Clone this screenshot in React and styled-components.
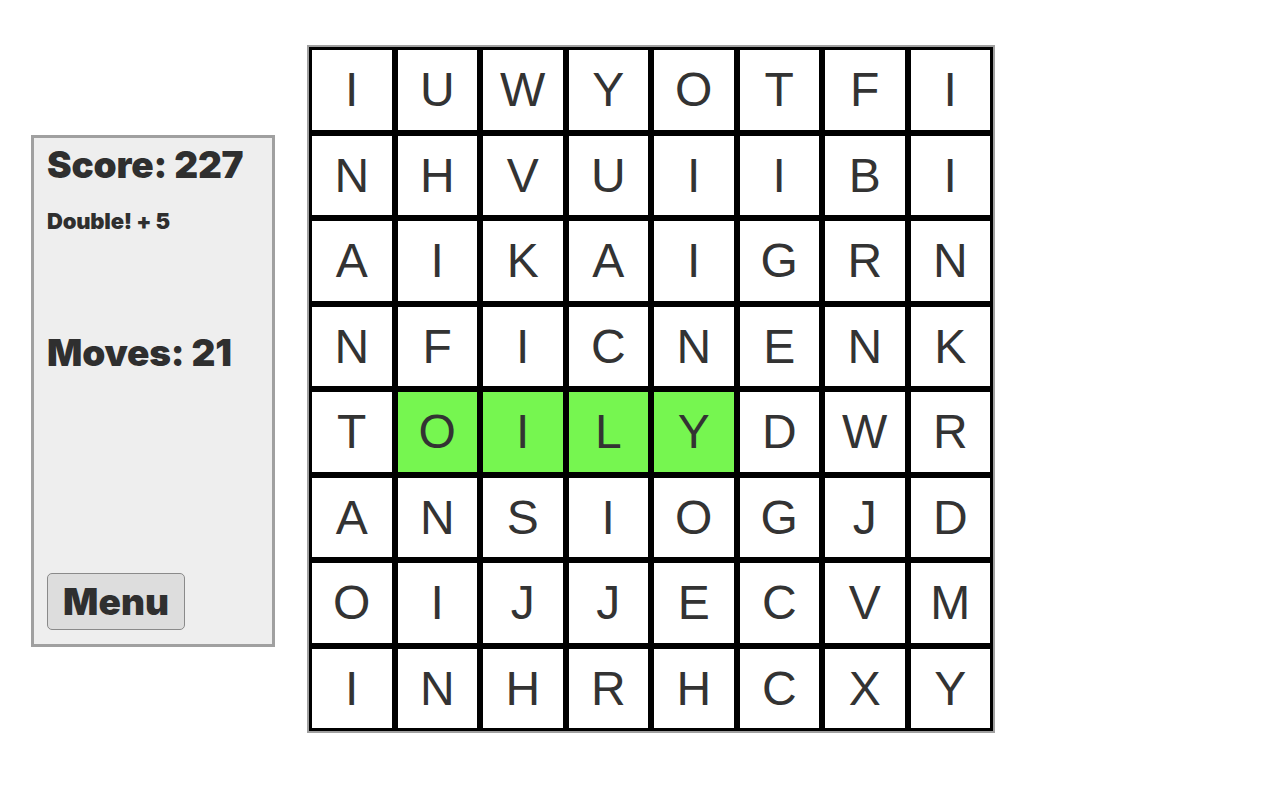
import React from "react";
import styled, { createGlobalStyle } from "styled-components";

const GlobalStyle = createGlobalStyle`
  body {
    margin: 8px;
    background: #ffffff;
    font-family: "Liberation Sans", Arial, sans-serif;
  }
`;

const board = [
  "IUWYOTFI",
  "NHVUIIBI",
  "AIKAIGRN",
  "NFICNENK",
  "TOILYDWR",
  "ANSIOGJD",
  "OIJJECVM",
  "INHRHCXY",
];

const selected = ["4-1", "4-2", "4-3", "4-4"];

const Page = styled.div`
  display: flex;
  align-items: center;
  padding-top: 37px;
`;

const Panel = styled.div`
  display: flex;
  flex-direction: column;
  box-sizing: border-box;
  width: 244px;
  height: 512px;
  margin: 3px 32px 0 23px;
  padding: 5px 14px 14px 13px;
  background: #eeeeee;
  border: 3px solid #a0a0a0;
  font-family: "Inter", "Noto Sans", sans-serif;
  font-weight: 900;
  color: #2f2f2f;
`;

const Stat = styled.div`
  font-size: ${(p) => p.size}px;
  line-height: 1.2;
  letter-spacing: -0.2px;
  margin-top: ${(p) => p.top || 0}px;
`;

const Spacer = styled.div`
  flex: 1;
`;

const MenuButton = styled.button`
  align-self: flex-start;
  width: 138px;
  height: 57px;
  padding: 0;
  background: #dddddd;
  border: 1px solid #8a8a8a;
  border-radius: 5px;
  font-family: "Inter", "Noto Sans", sans-serif;
  font-weight: 900;
  font-size: 37px;
  color: #2f2f2f;
  cursor: pointer;
`;

const Board = styled.div`
  display: grid;
  grid-template-columns: repeat(8, 85.5px);
  grid-auto-rows: 85.5px;
  border: 2px solid #a0a0a0;
`;

const Cell = styled.div`
  display: flex;
  align-items: center;
  justify-content: center;
  box-sizing: border-box;
  border: 3px solid #000000;
  background: ${(p) => (p.active ? "#76f650" : "#ffffff")};
  font-family: "Liberation Sans", Arial, sans-serif;
  font-size: 48px;
  color: #333333;
  user-select: none;
`;

export default function App() {
  return (
    <>
      <GlobalStyle />
      <Page>
        <Panel>
          <Stat size={37}>Score: 227</Stat>
          <Stat size={22} top={21}>Double! + 5</Stat>
          <Stat size={37} top={97}>Moves: 21</Stat>
          <Spacer />
          <MenuButton>Menu</MenuButton>
        </Panel>
        <Board>
          {board.map((row, r) =>
            row.split("").map((ch, c) => (
              <Cell key={`${r}-${c}`} active={selected.includes(`${r}-${c}`)}>
                {ch}
              </Cell>
            ))
          )}
        </Board>
      </Page>
    </>
  );
}
